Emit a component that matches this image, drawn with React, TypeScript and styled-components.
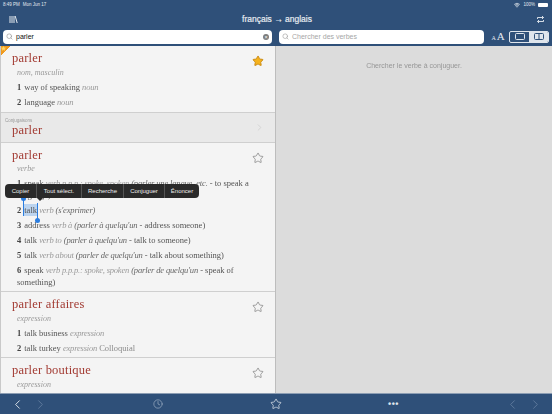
import React from "react";
import styled, { createGlobalStyle } from "styled-components";
import { ChevronLeft, ChevronRight, Clock, Search, Star, Wifi } from "lucide-react";

const GlobalStyle = createGlobalStyle`
  html, body {
    margin: 0;
    padding: 0;
    background: #2f5079;
  }
  * {
    box-sizing: border-box;
  }
`;

const Page = styled.div`
  width: 552px;
  height: 414px;
  display: flex;
  flex-direction: column;
  overflow: hidden;
  background: #2f5079;
  font-family: "Liberation Sans", Arial, sans-serif;
`;

const Header = styled.header`
  height: 46px;
  flex: none;
  display: flex;
  flex-direction: column;
  color: #fff;
`;

const StatusBar = styled.div`
  height: 9px;
  padding: 0 4px 0 3px;
  display: flex;
  align-items: center;
  justify-content: space-between;
  font-size: 4.5px;
  color: #e4e9ef;
`;

const StatusGroup = styled.div`
  display: flex;
  align-items: center;
  gap: 3px;
`;

const Battery = styled.span`
  width: 10px;
  height: 4px;
  background: #fff;
  border-radius: 1px;
`;

const TitleRow = styled.div`
  height: 20px;
  padding: 0 7px 0 9px;
  display: flex;
  align-items: center;
  justify-content: space-between;
`;

const Title = styled.div`
  font-size: 8.5px;
  font-weight: 400;
  -webkit-text-stroke: 0.2px #e6ebf1;
  color: #e6ebf1;
`;

const SearchRow = styled.div`
  height: 15px;
  display: grid;
  grid-template-columns: 276px 276px;
`;

const SearchCell = styled.div`
  padding: 0 3px;
  display: flex;
  align-items: center;
`;

const SearchField = styled.div<{ $width: number }>`
  width: ${(p) => p.$width}px;
  height: 14px;
  padding: 0 3px;
  display: flex;
  align-items: center;
  gap: 3px;
  background: #fff;
  border-radius: 4px;
  font-size: 7px;
  color: #222;
`;

const SearchText = styled.span<{ $muted?: boolean }>`
  flex: 1;
  color: ${(p) => (p.$muted ? "#a6a6a6" : "#111")};
`;

const ClearDot = styled.span`
  width: 6px;
  height: 6px;
  border-radius: 50%;
  background: #7d7d7d;
  color: #fff;
  font-size: 5.5px;
  line-height: 6px;
  text-align: center;
`;

const SizeLabel = styled.span`
  margin: 2px 0 0 7px;
  width: 13px;
  font-family: "Liberation Serif", serif;
  color: #e6ebf1;
  font-size: 11px;
  line-height: 11px;
  white-space: nowrap;
  display: flex;
  align-items: baseline;
`;

const SmallA = styled.span`
  font-size: 6px;
  margin-right: 1px;
`;

const Segmented = styled.div`
  margin: 0 0 0 5px;
  display: grid;
  grid-template-columns: 19px 19px;
  height: 12px;
  border: 1px solid #dfe5ec;
  border-radius: 2px;
  overflow: hidden;
`;

const Segment = styled.div<{ $on?: boolean }>`
  display: flex;
  align-items: center;
  justify-content: center;
  background: ${(p) => (p.$on ? "#dfe5ec" : "transparent")};
  color: ${(p) => (p.$on ? "#2f5079" : "#dfe5ec")};
`;

const Main = styled.main`
  flex: 1;
  min-height: 0;
  display: grid;
  grid-template-columns: 276px 276px;
`;

const LeftPane = styled.section`
  position: relative;
  overflow: hidden;
  background: #f4f4f4;
  border-left: 1px solid #c9c9c9;
  border-right: 1px solid #bdbdbd;
  font-family: "Liberation Serif", "Times New Roman", serif;
`;

const RightPane = styled.section`
  background: #dcdcdc;
  padding-top: 16px;
  text-align: center;
  font-size: 7px;
`;

const RightHint = styled.div`
  color: #969696;
  will-change: transform;
`;

const Entry = styled.article<{ $height: number }>`
  position: relative;
  height: ${(p) => p.$height}px;
  padding: 5px 11px 0;
  border-bottom: 1px solid #cfcfcf;
  will-change: transform;
`;

const Word = styled.h2`
  margin: 0;
  font-size: 12.5px;
  line-height: 15px;
  font-weight: 400;
  letter-spacing: 0.2px;
  color: #a23a32;
`;

const Category = styled.div`
  margin: 2px 0 3px 5px;
  font-size: 8px;
  line-height: 10px;
  font-style: italic;
  color: #9a9a9a;
`;

const VerbCategory = styled(Category)`
  margin-top: 1px;
`;

const Sense = styled.p`
  margin: 0 0 3px 5px;
  font-size: 8.5px;
  line-height: 12px;
  color: #555;
`;

const SenseNumber = styled.b`
  margin-right: 3px;
  color: #444;
`;

const Gloss = styled.i`
  letter-spacing: -0.2px;
  color: #9a9a9a;
`;

const Note = styled.i`
  letter-spacing: -0.15px;
  color: #666;
`;

const Plain = styled.span`
  color: #8a8a8a;
`;

const Selected = styled.span`
  position: relative;
  display: inline-block;
  background: #bcd4ef;
`;

const Handle = styled.span<{ $end?: boolean }>`
  position: absolute;
  ${(p) => (p.$end ? "right: -1px;" : "left: -1px;")}
  top: ${(p) => (p.$end ? "-1px" : "-6px")};
  width: 1px;
  height: 18px;
  background: #2b7de0;

  &::after {
    content: "";
    position: absolute;
    left: -2px;
    top: ${(p) => (p.$end ? "15px" : "-2px")};
    width: 5px;
    height: 5px;
    border-radius: 50%;
    background: #2b7de0;
  }
`;

const StarButton = styled.span`
  position: absolute;
  right: 11px;
  top: 9px;
  display: flex;
`;

const Ribbon = styled.span`
  position: absolute;
  z-index: 1;
  left: 0;
  top: 0;
  width: 10px;
  height: 10px;
  display: flex;
  background: linear-gradient(135deg, #f09a1e 50%, transparent 50%);
`;

const ConjugationRow = styled.div`
  position: relative;
  height: 30px;
  padding: 5px 4px 0;
  background: #e9e9e9;
  border-bottom: 1px solid #cfcfcf;
  will-change: transform;
`;

const ConjugationLabel = styled.div`
  font-family: "Liberation Sans", Arial, sans-serif;
  font-size: 4.5px;
  line-height: 5px;
  color: #9a9a9a;
`;

const ConjugationWord = styled(Word)`
  margin: 0 0 0 7px;
`;

const RowChevron = styled.span`
  position: absolute;
  right: 10px;
  top: 9px;
  color: #d2d2d2;
  display: flex;
`;

const Menu = styled.div`
  position: absolute;
  z-index: 2;
  left: 4px;
  top: 138px;
  height: 14px;
  display: flex;
  background: #2a2a2a;
  border-radius: 4px;
  font-family: "Liberation Sans", Arial, sans-serif;
  font-size: 6px;
  color: #eee;

  &::after {
    content: "";
    position: absolute;
    left: 32px;
    bottom: -3px;
    border-left: 3px solid transparent;
    border-right: 3px solid transparent;
    border-top: 3px solid #2a2a2a;
  }
`;

const MenuItem = styled.span<{ $width: number }>`
  width: ${(p) => p.$width}px;
  display: flex;
  align-items: center;
  justify-content: center;
  border-left: 1px solid #555;

  &:first-child {
    border-left: none;
  }
`;

const Footer = styled.footer`
  height: 21px;
  flex: none;
  padding: 0 0 0 10px;
  display: flex;
  align-items: center;
  border-top: 1px solid #8c9db3;
  color: #dfe5ec;
`;

const FooterSlot = styled.div<{ $width: number }>`
  width: ${(p) => p.$width}px;
  flex: none;
  display: flex;
  align-items: center;
  gap: 8px;
`;

const Dots = styled.span`
  font-size: 9px;
  font-weight: 700;
  letter-spacing: 0.5px;
  line-height: 9px;
`;

const Dim = styled.span`
  display: flex;
  color: #5f7a9c;
`;

const App = () => {
  return (
    <Page>
      <GlobalStyle />
      <Header>
        <StatusBar>
          <StatusGroup>
            <span>8:49 PM</span>
            <span>Mon Jun 17</span>
          </StatusGroup>
          <StatusGroup>
            <Wifi size={6} strokeWidth={3} />
            <span>100%</span>
            <Battery />
          </StatusGroup>
        </StatusBar>
        <TitleRow>
          <svg width="9" height="9" viewBox="0 0 9 9" fill="none" stroke="#e6ebf1" strokeWidth="1">
            <path d="M1 1v7M3 1v7M5 1v7M6.2 1l2 7" />
          </svg>
          <Title>français → anglais</Title>
          <svg width="9" height="9" viewBox="0 0 9 9" fill="none" stroke="#e6ebf1" strokeWidth="0.9">
            <path d="M1.5 4V2.5h6M6 1l1.5 1.5L6 4M7.5 5v1.5h-6M3 5L1.5 6.5 3 8" />
          </svg>
        </TitleRow>
        <SearchRow>
          <SearchCell>
            <SearchField $width={269}>
              <Search size={7} color="#8b8b8b" />
              <SearchText>parler</SearchText>
              <ClearDot>×</ClearDot>
            </SearchField>
          </SearchCell>
          <SearchCell>
            <SearchField $width={208}>
              <Search size={7} color="#9a9a9a" />
              <SearchText $muted>Chercher des verbes</SearchText>
            </SearchField>
            <SizeLabel>
              <SmallA>A</SmallA>A
            </SizeLabel>
            <Segmented>
              <Segment>
                <svg width="10" height="7" viewBox="0 0 10 7" fill="none" stroke="currentColor">
                  <rect x="0.5" y="0.5" width="9" height="6" rx="1" />
                </svg>
              </Segment>
              <Segment $on>
                <svg width="10" height="7" viewBox="0 0 10 7" fill="none" stroke="currentColor">
                  <rect x="0.5" y="0.5" width="9" height="6" rx="1" />
                  <path d="M5 0.5v6" />
                </svg>
              </Segment>
            </Segmented>
          </SearchCell>
        </SearchRow>
      </Header>

      <Main>
        <LeftPane>
          <Ribbon>
            <Star size={5} color="#ffd76a" fill="#ffd76a" />
          </Ribbon>
          <Entry $height={67}>
            <Word>parler</Word>
            <StarButton>
              <Star size={12} color="#c98a14" fill="#f5b21c" />
            </StarButton>
            <Category>nom, masculin</Category>
            <Sense>
              <SenseNumber>1</SenseNumber>way of speaking <Gloss>noun</Gloss>
            </Sense>
            <Sense>
              <SenseNumber>2</SenseNumber>language <Gloss>noun</Gloss>
            </Sense>
          </Entry>

          <ConjugationRow>
            <ConjugationLabel>Conjugaisons</ConjugationLabel>
            <ConjugationWord>parler</ConjugationWord>
            <RowChevron>
              <ChevronRight size={11} />
            </RowChevron>
          </ConjugationRow>

          <Entry $height={149}>
            <Word>parler</Word>
            <StarButton>
              <Star size={12} color="#808080" strokeWidth={1.5} />
            </StarButton>
            <VerbCategory>verbe</VerbCategory>
            <Sense>
              <SenseNumber>1</SenseNumber>speak <Gloss>verb p.p.p.: spoke, spoken</Gloss> <Note>(parler une langue, etc.</Note> - to speak a language)
            </Sense>
            <Sense>
              <SenseNumber>2</SenseNumber>
              <Selected>
                talk
                <Handle />
                <Handle $end />
              </Selected>{" "}
              <Gloss>verb</Gloss> <Note>(s'exprimer)</Note>
            </Sense>
            <Sense>
              <SenseNumber>3</SenseNumber>address <Gloss>verb à</Gloss> <Note>(parler à quelqu'un</Note> - address someone)
            </Sense>
            <Sense>
              <SenseNumber>4</SenseNumber>talk <Gloss>verb to</Gloss> <Note>(parler à quelqu'un</Note> - talk to someone)
            </Sense>
            <Sense>
              <SenseNumber>5</SenseNumber>talk <Gloss>verb about</Gloss> <Note>(parler de quelqu'un</Note> - talk about something)
            </Sense>
            <Sense>
              <SenseNumber>6</SenseNumber>speak <Gloss>verb p.p.p.: spoke, spoken</Gloss> <Note>(parler de quelqu'un</Note> - speak of something)
            </Sense>
          </Entry>

          <Entry $height={66}>
            <Word>parler affaires</Word>
            <StarButton>
              <Star size={12} color="#808080" strokeWidth={1.5} />
            </StarButton>
            <Category>expression</Category>
            <Sense>
              <SenseNumber>1</SenseNumber>talk business <Gloss>expression</Gloss>
            </Sense>
            <Sense>
              <SenseNumber>2</SenseNumber>talk turkey <Gloss>expression</Gloss> <Plain>Colloquial</Plain>
            </Sense>
          </Entry>

          <Entry $height={36}>
            <Word>parler boutique</Word>
            <StarButton>
              <Star size={12} color="#808080" strokeWidth={1.5} />
            </StarButton>
            <Category>expression</Category>
          </Entry>

          <Menu>
            <MenuItem $width={31}>Copier</MenuItem>
            <MenuItem $width={45}>Tout sélect.</MenuItem>
            <MenuItem $width={42}>Recherche</MenuItem>
            <MenuItem $width={41}>Conjuguer</MenuItem>
            <MenuItem $width={35}>Énoncer</MenuItem>
          </Menu>
        </LeftPane>
        <RightPane>
          <RightHint>Chercher le verbe à conjuguer.</RightHint>
        </RightPane>
      </Main>

      <Footer>
        <FooterSlot $width={143}>
          <ChevronLeft size={15} strokeWidth={1.5} />
          <Dim>
            <ChevronRight size={15} strokeWidth={1.5} />
          </Dim>
        </FooterSlot>
        <FooterSlot $width={117}>
          <Clock size={10} strokeWidth={1.5} color="#a9b9cc" />
        </FooterSlot>
        <FooterSlot $width={118}>
          <Star size={12} strokeWidth={1.5} />
        </FooterSlot>
        <FooterSlot $width={117}>
          <Dots>•••</Dots>
        </FooterSlot>
        <FooterSlot $width={38}>
          <Dim>
            <ChevronLeft size={15} strokeWidth={1.5} />
          </Dim>
          <Dim>
            <ChevronRight size={15} strokeWidth={1.5} />
          </Dim>
        </FooterSlot>
      </Footer>
    </Page>
  );
};

export default App;
